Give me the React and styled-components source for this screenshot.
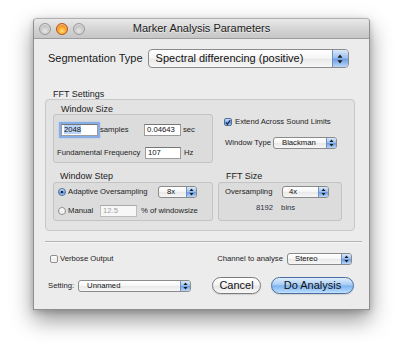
import React from 'react';
import styled, { createGlobalStyle } from 'styled-components';

const GlobalStyle = createGlobalStyle`
  html, body { margin: 0; padding: 0; background: #ffffff; }
  body { font-family: 'Liberation Sans', Arial, sans-serif; color: #1c1c1c; }
  * { box-sizing: border-box; }
`;

const Page = styled.div`
  width: 404px;
  height: 349px;
  padding: 18px 0 0 33px;
  overflow: hidden;
`;

const Window = styled.div`
  width: 337px;
  height: 292px;
  background: #ececec;
  border: 1px solid #8f8f8f;
  border-top-color: #b0b0b0;
  border-radius: 4px 4px 0 0;
  box-shadow: 0 10px 22px rgba(0, 0, 0, 0.42), 0 2px 6px rgba(0, 0, 0, 0.18);
  display: flex;
  flex-direction: column;
`;

const TitleBar = styled.div`
  height: 20px;
  display: grid;
  grid-template-columns: 1fr auto 1fr;
  align-items: center;
  background: linear-gradient(#e9e9e9, #d2d2d2 60%, #c6c6c6);
  border-bottom: 1px solid #9d9d9d;
  border-radius: 3px 3px 0 0;
`;

const Lights = styled.div`
  display: flex;
  gap: 5px;
  padding-left: 5px;
`;

const Light = styled.span`
  width: 12px;
  height: 12px;
  border-radius: 50%;
  border: 1px solid ${p => (p.$on ? '#b4561a' : '#9a9a9a')};
  background: ${p =>
    p.$on
      ? 'radial-gradient(circle at 50% 70%, #ffe27a 0%, #fba52c 45%, #e0570f 100%)'
      : 'radial-gradient(circle at 50% 70%, #e6e6e6 0%, #c6c6c6 55%, #a8a8a8 100%)'};
  box-shadow: inset 0 1px 1px rgba(255, 255, 255, 0.6);
`;

const Title = styled.div`
  font-size: 11px;
  line-height: 19px;
  color: #202020;
  text-shadow: 0 1px 0 rgba(255, 255, 255, 0.6);
`;

const Body = styled.div`
  flex: 1;
  display: flex;
  flex-direction: column;
  padding-top: 10px;
`;

const SegRow = styled.div`
  display: flex;
  align-items: center;
  gap: 5px;
  margin-left: 14px;
  height: 19px;
`;

const BigLabel = styled.span`
  font-size: 11px;
  line-height: 19px;
  color: #1a1a1a;
`;

const SectionTitle = styled.div`
  font-size: 9px;
  line-height: ${p => p.$lh || 10}px;
  height: ${p => p.$lh || 10}px;
  margin-left: ${p => p.$indent || 0}px;
  margin-top: ${p => p.$top || 0}px;
  color: #222;
`;

const OuterGroup = styled.div`
  margin-left: 11px;
  width: 310px;
  height: 132px;
  background: #e3e3e3;
  border: 1px solid #c8c8c8;
  border-radius: 4px;
  padding: 4px 0 0 7px;
  display: grid;
  grid-template-columns: 160px 124px;
  column-gap: 5px;
  align-content: start;
`;

const Cell = styled.div`
  margin-top: ${p => p.$top || 0}px;
  display: flex;
  flex-direction: column;
`;

const SubBox = styled.div`
  height: ${p => p.$h}px;
  background: #dcdcdc;
  border: 1px solid #c3c3c3;
  border-radius: 3px;
  padding-top: ${p => p.$pt || 0}px;
  display: flex;
  flex-direction: column;
  gap: ${p => p.$gap || 0}px;
`;

const Row = styled.div`
  display: flex;
  align-items: center;
  height: ${p => p.$h || 12}px;
  padding-left: ${p => p.$pl || 0}px;
  gap: ${p => p.$gap || 0}px;
`;

const Small = styled.span`
  font-size: 7.7px;
  line-height: 12px;
  white-space: nowrap;
  color: ${p => p.$muted ? '#2c3442' : '#1d1d1d'};
  width: ${p => (p.$w ? `${p.$w}px` : 'auto')};
  flex: none;
  text-align: ${p => p.$align || 'left'};
`;

const Field = styled.div`
  width: ${p => p.$w}px;
  height: 12px;
  flex: none;
  background: ${p => (p.$disabled ? '#f7f7f7' : '#ffffff')};
  border: 1px solid ${p => (p.$disabled ? '#bdbdbd' : '#9c9c9c')};
  border-top-color: ${p => (p.$disabled ? '#a9a9a9' : '#777')};
  box-shadow: ${p => (p.$focus ? '0 0 0 2px #87ade6, 0 0 2px 2px #a9c6f0' : 'none')};
  font-size: 7.7px;
  line-height: 10px;
  padding-left: 2px;
  color: ${p => (p.$disabled ? '#a0a0a0' : '#111')};
`;

const Selected = styled.span`
  background: #b8d4f8;
`;

const PopupFrame = styled.div`
  display: flex;
  align-items: stretch;
  flex: none;
  width: ${p => p.$w}px;
  height: ${p => p.$h}px;
  border: 1px solid #8b8b8b;
  border-radius: ${p => (p.$big ? 4 : 3)}px;
  background: linear-gradient(#ffffff, #f6f6f6 48%, #e9e9e9 52%, #f7f7f7);
  overflow: hidden;
`;

const PopupText = styled.span`
  flex: 1;
  font-size: ${p => (p.$big ? 11 : 7.7)}px;
  line-height: ${p => p.$h - 2}px;
  padding-left: ${p => p.$pl}px;
  white-space: nowrap;
  color: #111;
`;

const PopupCap = styled.span`
  flex: none;
  width: ${p => p.$cw}px;
  display: flex;
  align-items: center;
  justify-content: center;
  background: linear-gradient(#dbe9fa, #9cc1ef 45%, #6f9fe3 55%, #b9d7fa);
  border-left: 1px solid #6e8fc0;
`;

function Popup({ w, h = 12, text, big, pl = 7, cw = 10 }) {
  const aw = big ? 5 : 4;
  return (
    <PopupFrame $w={w} $h={h} $big={big}>
      <PopupText $big={big} $h={h} $pl={pl}>{text}</PopupText>
      <PopupCap $cw={cw}>
        <svg width={aw + 1} height={big ? 10 : 8} viewBox="0 0 6 10">
          <path d="M3 0.5 L5.5 3.8 L0.5 3.8 Z" fill="#1b1b1b" />
          <path d="M3 9.5 L5.5 6.2 L0.5 6.2 Z" fill="#1b1b1b" />
        </svg>
      </PopupCap>
    </PopupFrame>
  );
}

const CheckBox = styled.span`
  width: 8px;
  height: 8px;
  flex: none;
  border-radius: 2px;
  border: 1px solid ${p => (p.$on ? '#4d6f9e' : '#8e8e8e')};
  background: ${p =>
    p.$on
      ? 'linear-gradient(#cfe2f9, #7eaeea 50%, #5d94e0 55%, #a9cdf7)'
      : 'linear-gradient(#ffffff, #eeeeee 55%, #f8f8f8)'};
  display: flex;
  align-items: center;
  justify-content: center;
  margin-right: ${p => p.$mr || 3}px;
`;

const Radio = styled.span`
  width: 8px;
  height: 8px;
  flex: none;
  border-radius: 50%;
  border: 1px solid ${p => (p.$on ? '#4d6f9e' : '#8e8e8e')};
  background: ${p =>
    p.$on
      ? 'radial-gradient(circle, #1b2533 0 1.3px, transparent 1.6px), linear-gradient(#cfe2f9, #7eaeea 50%, #5d94e0 55%, #a9cdf7)'
      : 'linear-gradient(#ffffff, #eeeeee 55%, #f8f8f8)'};
  margin-right: 2px;
`;

const RightOptions = styled.div`
  padding: 12px 0 0 6px;
  display: flex;
  flex-direction: column;
  gap: 9px;
`;

const Separator = styled.div`
  margin: 10px 0 0 11px;
  width: 317px;
  height: 2px;
  border-top: 1px solid #b2b2b2;
  border-bottom: 1px solid #f6f6f6;
`;

const BottomRow = styled.div`
  display: flex;
  align-items: center;
  justify-content: space-between;
  height: ${p => p.$h}px;
  margin-top: ${p => p.$top}px;
  padding-left: ${p => p.$pl}px;
  padding-right: ${p => p.$pr}px;
`;

const Group = styled.div`
  display: flex;
  align-items: center;
  gap: ${p => p.$gap || 0}px;
`;

const PushButton = styled.button`
  width: ${p => p.$w}px;
  height: 17px;
  border-radius: 9px;
  padding: 0;
  font-family: 'Liberation Sans', Arial, sans-serif;
  font-size: 11px;
  line-height: 15px;
  color: #111;
  border: 1px solid ${p => (p.$primary ? '#4b6da0' : '#7b7b7b')};
  background: ${p =>
    p.$primary
      ? 'linear-gradient(#e0eefc, #a8cdf5 45%, #7fb3ee 52%, #a6d0fa 85%, #c6e3fd)'
      : 'linear-gradient(#ffffff, #f5f5f5 48%, #e6e6e6 52%, #f8f8f8)'};
  box-shadow: 0 1px 1px rgba(0, 0, 0, 0.12);
`;

export default function App() {
  return (
    <>
      <GlobalStyle />
      <Page>
        <Window>
          <TitleBar>
            <Lights>
              <Light />
              <Light $on />
              <Light />
            </Lights>
            <Title>Marker Analysis Parameters</Title>
            <span />
          </TitleBar>
          <Body>
            <SegRow>
              <BigLabel>Segmentation Type</BigLabel>
              <Popup w={201} h={19} big pl={7} cw={16} text="Spectral differencing (positive)" />
            </SegRow>

            <SectionTitle $indent={19} $top={21}>FFT Settings</SectionTitle>
            <OuterGroup>
              <Cell>
                <SectionTitle $indent={8}>Window Size</SectionTitle>
                <SubBox $h={49} $pt={9} $gap={11}>
                  <Row $pl={7}>
                    <Field $w={37} $focus>
                      <Selected>2048</Selected>
                    </Field>
                    <Small $w={46} style={{ paddingLeft: 2 }}>samples</Small>
                    <Field $w={37}>0.04643</Field>
                    <Small style={{ paddingLeft: 2 }}>sec</Small>
                  </Row>
                  <Row $pl={3}>
                    <Small $w={88}>Fundamental Frequency</Small>
                    <Field $w={36}>107</Field>
                    <Small style={{ paddingLeft: 3 }}>Hz</Small>
                  </Row>
                </SubBox>
              </Cell>

              <RightOptions>
                <Row>
                  <CheckBox $on>
                    <svg width="7" height="7" viewBox="0 0 7 7">
                      <path d="M1 3.6 L2.8 5.6 L6.2 0.8" stroke="#1a2230" strokeWidth="1.3" fill="none" />
                    </svg>
                  </CheckBox>
                  <Small>Extend Across Sound Limits</Small>
                </Row>
                <Row $pl={1}>
                  <Small $w={48}>Window Type</Small>
                  <Popup w={64} text="Blackman" pl={8} />
                </Row>
              </RightOptions>

              <Cell $top={8}>
                <SectionTitle $indent={7} $lh={11}>Window Step</SectionTitle>
                <SubBox $h={39} $pt={3} $gap={7}>
                  <Row $pl={4}>
                    <Radio $on />
                    <Small $w={90}>Adaptive Oversampling</Small>
                    <Popup w={39} text="8x" pl={8} />
                  </Row>
                  <Row $pl={4}>
                    <Radio />
                    <Small $w={32}>Manual</Small>
                    <Field $w={37} $disabled>12.5</Field>
                    <Small style={{ paddingLeft: 4 }}>% of windowsize</Small>
                  </Row>
                </SubBox>
              </Cell>

              <Cell $top={8}>
                <SectionTitle $indent={8} $lh={11}>FFT Size</SectionTitle>
                <SubBox $h={39} $pt={3} $gap={4}>
                  <Row $pl={6}>
                    <Small $w={57}>Oversampling</Small>
                    <Popup w={47} text="4x" pl={6} />
                  </Row>
                  <Row $pl={37} $gap={8}>
                    <Small $muted>8192</Small>
                    <Small $muted>bins</Small>
                  </Row>
                </SubBox>
              </Cell>
            </OuterGroup>

            <Separator />

            <BottomRow $h={12} $top={10} $pl={16} $pr={17}>
              <Group>
                <CheckBox $mr={2} />
                <Small>Verbose Output</Small>
              </Group>
              <Group $gap={4}>
                <Small>Channel to analyse</Small>
                <Popup w={65} text="Stereo" pl={7} />
              </Group>
            </BottomRow>

            <BottomRow $h={17} $top={12} $pl={14} $pr={15}>
              <Group $gap={4}>
                <Small>Setting:</Small>
                <Popup w={113} text="Unnamed" pl={8} />
              </Group>
              <Group $gap={10}>
                <PushButton $w={49}>Cancel</PushButton>
                <PushButton $w={83} $primary>Do Analysis</PushButton>
              </Group>
            </BottomRow>
          </Body>
        </Window>
      </Page>
    </>
  );
}
